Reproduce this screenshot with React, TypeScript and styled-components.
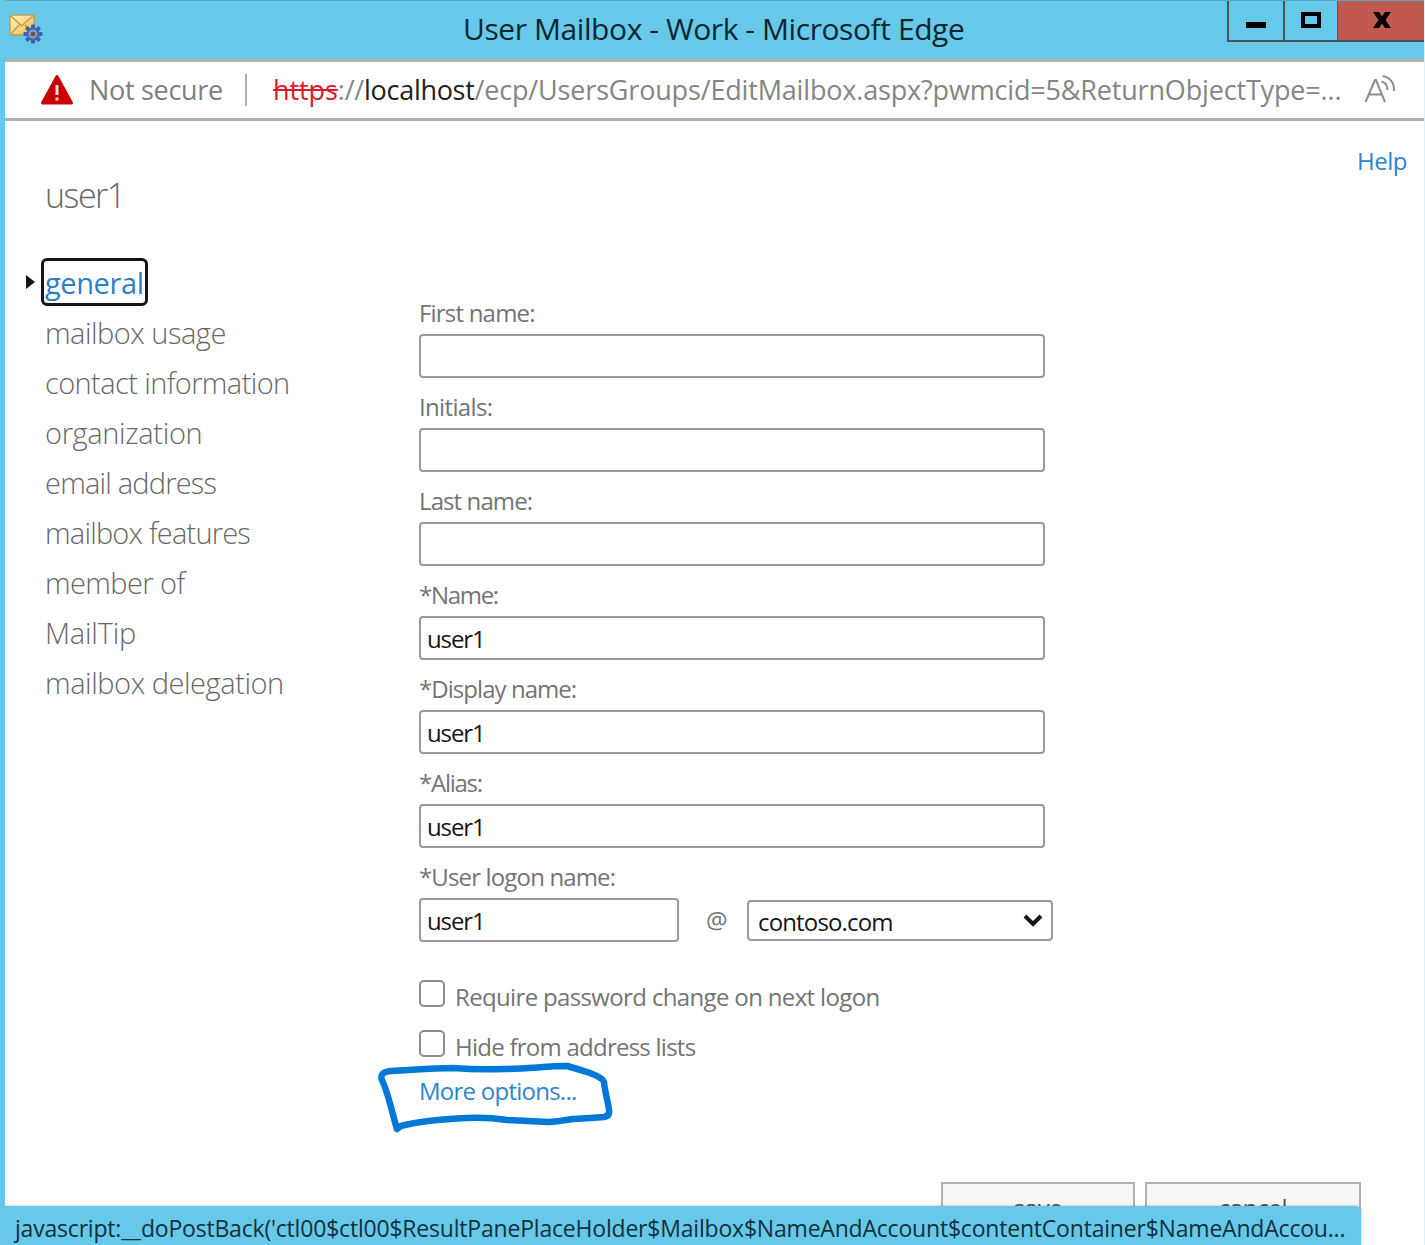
import React from "react";
import styled, { createGlobalStyle } from "styled-components";

const sky = "#66c9e9";
const grey = "#747474";
const lightGrey = "#686868";
const link = "#2c86cf";

const GlobalStyle = createGlobalStyle`
  *, *::before, *::after { box-sizing: border-box; }
  body {
    margin: 0;
    overflow: hidden;
    background: #fff;
    font-family: "Open Sans", "Noto Sans", sans-serif;
    color: ${grey};
  }
`;

const Window = styled.div`
  position: relative;
  display: flex;
  flex-direction: column;
  width: 1425px;
  height: 1245px;
  overflow: hidden;
  border-left: 5px solid ${sky};
  border-right: 1px solid #d9f1f9;
  background: #fff;
`;

const TitleBar = styled.header`
  display: flex;
  align-items: flex-start;
  flex: none;
  height: 59px;
  margin: 0 -1px 0 -5px;
  border-top: 1px solid #5aa6c2;
  background: ${sky};
`;

const AppIcon = styled.svg`
  flex: none;
  width: 34px;
  height: 32px;
  margin: 13px 0 0 9px;
`;

const Title = styled.h1`
  flex: 1;
  margin: 0 0 0 420px;
  color: #0d2630;
  font-size: 30px;
  font-weight: 400;
  line-height: 55px;
  letter-spacing: -0.42px;
  white-space: nowrap;
`;

const WindowButtons = styled.div`
  display: flex;
  height: 41px;
  margin-right: -1px;
  border: solid #45565c;
  border-width: 0 0 2px 2px;
`;

const WindowButton = styled.button<{ $width: number; $close?: boolean }>`
  display: flex;
  align-items: flex-start;
  justify-content: center;
  width: ${(p) => p.$width}px;
  height: 39px;
  padding: 10px 0 0;
  border: 0;
  border-left: ${(p) => (p.$close ? "1px solid #7c4a45" : "0")};
  background: ${(p) => (p.$close ? "#c1594f" : "transparent")};

  & + &:not(:last-child) { border-left: 2px solid #45565c; }
`;

const AddressBar = styled.div`
  display: flex;
  align-items: center;
  flex: none;
  height: 62px;
  padding-left: 35px;
  border: solid #b0b0b0;
  border-width: 3px 0;
  font-size: 27px;
  line-height: 54px;
  white-space: nowrap;
`;

const WarningIcon = styled.svg`
  width: 34px;
  height: 32px;
  margin-right: 15px;
`;

const Security = styled.span`
  width: 156px;
  color: #808080;
  letter-spacing: -0.3px;
`;

const Divider = styled.i`
  width: 2px;
  height: 32px;
  margin-right: 26px;
  background: #b0b0b0;
`;

const Url = styled.span`
  width: 1091px;
  color: #858585;
  letter-spacing: -0.17px;
`;

const Scheme = styled.s`
  color: #dc1c2e;
  letter-spacing: -0.1px;
  text-decoration-thickness: 2px;
`;

const Host = styled.span`
  color: #202020;
  letter-spacing: -0.3px;
`;

const ReadAloudIcon = styled.svg`
  width: 34px;
  height: 32px;
  margin-top: -3px;
`;

const Page = styled.main`
  display: grid;
  grid-template-columns: 374px 634px 1fr;
  flex: 1;
  padding: 23px 17px 0 40px;
`;

const Sidebar = styled.aside`
  padding-top: 28px;
`;

const Heading = styled.h2`
  margin: 0 0 40px;
  color: ${lightGrey};
  font-size: 34px;
  font-weight: 300;
  line-height: 46px;
  letter-spacing: -1.5px;
`;

const Nav = styled.nav`
  display: flex;
  flex-direction: column;
`;

const NavItem = styled.a<{ $tracking: number; $current?: boolean }>`
  display: flex;
  align-items: center;
  align-self: flex-start;
  height: 48px;
  margin: 0 0 2px -4px;
  padding: 0 1px;
  border: 3px solid ${(p) => (p.$current ? "#161616" : "transparent")};
  border-radius: 6px;
  color: ${(p) => (p.$current ? "#2a7fc6" : lightGrey)};
  font-size: 29px;
  font-weight: ${(p) => (p.$current ? 400 : 300)};
  letter-spacing: ${(p) => p.$tracking}px;
  white-space: nowrap;

  &::before {
    content: ${(p) => (p.$current ? '""' : "none")};
    margin: 0 10px 0 -19px;
    border: solid transparent;
    border-width: 7px 0 7px 9px;
    border-left-color: #161616;
  }
`;

const Form = styled.form`
  padding-top: 156px;
`;

const Field = styled.div`
  display: flex;
  flex-direction: column;
  gap: 8px;
  margin-bottom: 16px;
`;

const Label = styled.label<{ $tracking: number }>`
  height: 26px;
  font-size: 24px;
  line-height: 26px;
  letter-spacing: ${(p) => p.$tracking}px;
  white-space: nowrap;
`;

const TextInput = styled.input<{ $width?: number }>`
  width: ${(p) => p.$width ?? 626}px;
  height: 44px;
  padding: 1px 6px 0;
  border: 2px solid #999;
  border-radius: 4px;
  background: #fff;
  color: #161616;
  font: 24px "Open Sans", sans-serif;
  letter-spacing: -1.1px;
`;

const LogonRow = styled.div`
  display: flex;
  align-items: center;
`;

const At = styled.span`
  width: 68px;
  padding-left: 27px;
  font-size: 24px;
  line-height: 36px;
  letter-spacing: -1px;
`;

const DomainSelect = styled.button`
  display: flex;
  align-items: center;
  justify-content: space-between;
  width: 306px;
  height: 41px;
  margin-top: 1px;
  padding: 1px 8px 0 9px;
  border: 2px solid #999;
  border-radius: 4px;
  background: #fff;
  color: #161616;
  font: 24px "Open Sans", sans-serif;
  letter-spacing: -0.85px;
`;

const Checks = styled.div`
  display: flex;
  flex-direction: column;
  gap: 14px;
  padding-top: 22px;
`;

const CheckRow = styled.label<{ $tracking: number }>`
  display: flex;
  align-items: flex-start;
  gap: 10px;
  height: 36px;
  font-size: 24px;
  line-height: 34px;
  letter-spacing: ${(p) => p.$tracking}px;
  white-space: nowrap;
`;

const Checkbox = styled.input`
  appearance: none;
  width: 26px;
  height: 27px;
  margin: 0;
  border: 2px solid #8c8c8c;
  border-radius: 5px;
  background: #fff;
`;

const MoreOptions = styled.div`
  position: relative;
  padding-top: 10px;
`;

const TextLink = styled.a<{ $tracking?: number }>`
  display: block;
  color: ${link};
  font-size: 24px;
  line-height: 30px;
  letter-spacing: ${(p) => p.$tracking ?? 0}px;
  white-space: nowrap;
`;

const InkCircle = styled.svg`
  position: absolute;
  top: -5px;
  left: -44px;
  width: 240px;
  height: 76px;
  pointer-events: none;
`;

const HelpArea = styled.div`
  justify-self: end;
  padding-top: 2px;
`;

const Actions = styled.footer`
  display: flex;
  flex: none;
  justify-content: flex-end;
  gap: 10px;
  height: 63px;
  padding-right: 63px;
`;

const ActionButton = styled.button<{ $width: number }>`
  width: ${(p) => p.$width}px;
  height: 50px;
  padding: 0;
  border: 2px solid #abb3b5;
  background: #f7f7f7;
  color: #555;
  font: 24px "Open Sans", sans-serif;
  letter-spacing: -0.3px;
`;

const StatusBar = styled.div`
  position: absolute;
  bottom: 0;
  left: -5px;
  width: 1361px;
  height: 39px;
  padding: 4px 0 0 15px;
  border-top-right-radius: 6px;
  background: ${sky};
  box-shadow: 0 0 3px rgba(0, 0, 0, 0.3);
  color: #14303b;
  font-size: 23px;
  line-height: 36px;
  letter-spacing: -0.2px;
  white-space: nowrap;
`;

const sections = [
  { name: "general", tracking: -0.4, current: true },
  { name: "mailbox usage", tracking: -0.5 },
  { name: "contact information", tracking: -0.6 },
  { name: "organization", tracking: -0.35 },
  { name: "email address", tracking: -0.8 },
  { name: "mailbox features", tracking: -0.8 },
  { name: "member of", tracking: -0.6 },
  { name: "MailTip", tracking: -0.2 },
  { name: "mailbox delegation", tracking: -0.45 },
];

const fields = [
  { label: "First name:", value: "", tracking: -0.8 },
  { label: "Initials:", value: "", tracking: -0.65 },
  { label: "Last name:", value: "", tracking: -0.9 },
  { label: "*Name:", value: "user1", tracking: -1.3 },
  { label: "*Display name:", value: "user1", tracking: -0.95 },
  { label: "*Alias:", value: "user1", tracking: -1.25 },
];

const gearTeeth = [0, 45, 90, 135, 180, 225, 270, 315];

function MailboxIcon() {
  return (
    <AppIcon viewBox="0 0 34 32">
      <defs>
        <linearGradient id="paper" x1="0" y1="0" x2="1" y2="1">
          <stop offset="0" stopColor="#fff6c4" />
          <stop offset="1" stopColor="#edb94d" />
        </linearGradient>
      </defs>
      <rect x="1" y="1" width="24" height="20" fill="url(#paper)" stroke="#bd9c5c" strokeWidth="1.5" />
      <path d="M2 2l10.500 10L24 2M2 20l8-9M24 20l-8-9" fill="none" stroke="#c99b45" strokeWidth="1.500" />
      {gearTeeth.map((angle) => (
        <rect key={angle} x="22" y="10.500" width="4" height="6" rx="1" fill="#415fa8" transform={`rotate(${angle} 24 20)`} />
      ))}
      <circle cx="24" cy="20" r="5.500" fill="#93a9dc" stroke="#4868b4" strokeWidth="2.500" />
      <circle cx="24" cy="20" r="2.600" fill="#655f50" />
    </AppIcon>
  );
}

export default function App() {
  return (
    <>
      <GlobalStyle />
      <Window>
        <TitleBar>
          <MailboxIcon />
          <Title>User Mailbox - Work - Microsoft Edge</Title>
          <WindowButtons>
            <WindowButton $width={54} aria-label="Minimize">
              <svg width="22" height="20">
                <path d="M1 14h20" stroke="#000" strokeWidth="6" />
              </svg>
            </WindowButton>
            <WindowButton $width={54} aria-label="Maximize">
              <svg width="22" height="20">
                <path d="M3 3h16v12H3z" fill="none" stroke="#000" strokeWidth="4" />
              </svg>
            </WindowButton>
            <WindowButton $width={89} $close aria-label="Close">
              <svg width="20" height="20">
                <path d="M1 1h6l3 4.500L13 1h6l-5.500 8 5.500 8h-6l-3-4.500L7 17H1l5.500-8z" />
              </svg>
            </WindowButton>
          </WindowButtons>
        </TitleBar>

        <AddressBar>
          <WarningIcon viewBox="0 0 34 32">
            <path d="M17 2.500L31.500 29H2.500z" fill="#c80000" stroke="#c80000" strokeWidth="3" strokeLinejoin="round" />
            <path d="M17 11v10M17 23.500v3" stroke="#f7dada" strokeWidth="3" />
          </WarningIcon>
          <Security>Not secure</Security>
          <Divider />
          <Url>
            <Scheme>https</Scheme>://<Host>localhost</Host>
            /ecp/UsersGroups/EditMailbox.aspx?pwmcid=5&amp;ReturnObjectType=...
          </Url>
          <ReadAloudIcon viewBox="0 0 34 32" fill="none" stroke="#8d8d8d" strokeWidth="2">
            <path d="M1.500 29L11 7h1L21 29M5 21.500h13" />
            <path d="M17.500 8.500c4 1 6 4 6 8.500M18.500 3c7.500 1 12 7 11.500 15" />
          </ReadAloudIcon>
        </AddressBar>

        <Page>
          <Sidebar>
            <Heading>user1</Heading>
            <Nav>
              {sections.map((s) => (
                <NavItem key={s.name} $tracking={s.tracking} $current={s.current}>
                  {s.name}
                </NavItem>
              ))}
            </Nav>
          </Sidebar>

          <Form>
            {fields.map((f) => (
              <Field key={f.label}>
                <Label $tracking={f.tracking}>{f.label}</Label>
                <TextInput defaultValue={f.value} />
              </Field>
            ))}
            <Field>
              <Label $tracking={-0.85}>*User logon name:</Label>
              <LogonRow>
                <TextInput $width={260} defaultValue="user1" />
                <At>@</At>
                <DomainSelect type="button">
                  contoso.com
                  <svg width="20" height="16" viewBox="0 0 20 16">
                    <path d="M2 3l8 8 8-8" fill="none" stroke="#161616" strokeWidth="4" />
                  </svg>
                </DomainSelect>
              </LogonRow>
            </Field>

            <Checks>
              <CheckRow $tracking={-0.65}>
                <Checkbox type="checkbox" />
                Require password change on next logon
              </CheckRow>
              <CheckRow $tracking={-0.75}>
                <Checkbox type="checkbox" />
                Hide from address lists
              </CheckRow>
            </Checks>

            <MoreOptions>
              <TextLink $tracking={-0.75}>More options...</TextLink>
              <InkCircle viewBox="375 1061 240 76">
                <path
                  d="M397 1129C392 1113 389 1095 382 1080Q379 1072 391 1071C412 1070 432 1068 453 1068Q478 1070 503 1069C526 1069 547 1066 567 1066Q578 1069 590 1073 603 1078 604 1082C605 1093 608 1101 609 1110Q610 1116 604 1117 592 1118 573 1119 555 1122 548 1122 527 1121 507 1120 487 1117 467 1118C443 1119 420 1121 401 1126z"
                  fill="none"
                  stroke="#0078d7"
                  strokeWidth="6.500"
                  strokeLinecap="round"
                  strokeLinejoin="round"
                />
              </InkCircle>
            </MoreOptions>
          </Form>

          <HelpArea>
            <TextLink $tracking={-0.5}>Help</TextLink>
          </HelpArea>
        </Page>

        <Actions>
          <ActionButton $width={194}>save</ActionButton>
          <ActionButton $width={216}>cancel</ActionButton>
        </Actions>

        <StatusBar>
          javascript:__doPostBack('ctl00$ctl00$ResultPanePlaceHolder$Mailbox$NameAndAccount$contentContainer$NameAndAccou...
        </StatusBar>
      </Window>
    </>
  );
}
